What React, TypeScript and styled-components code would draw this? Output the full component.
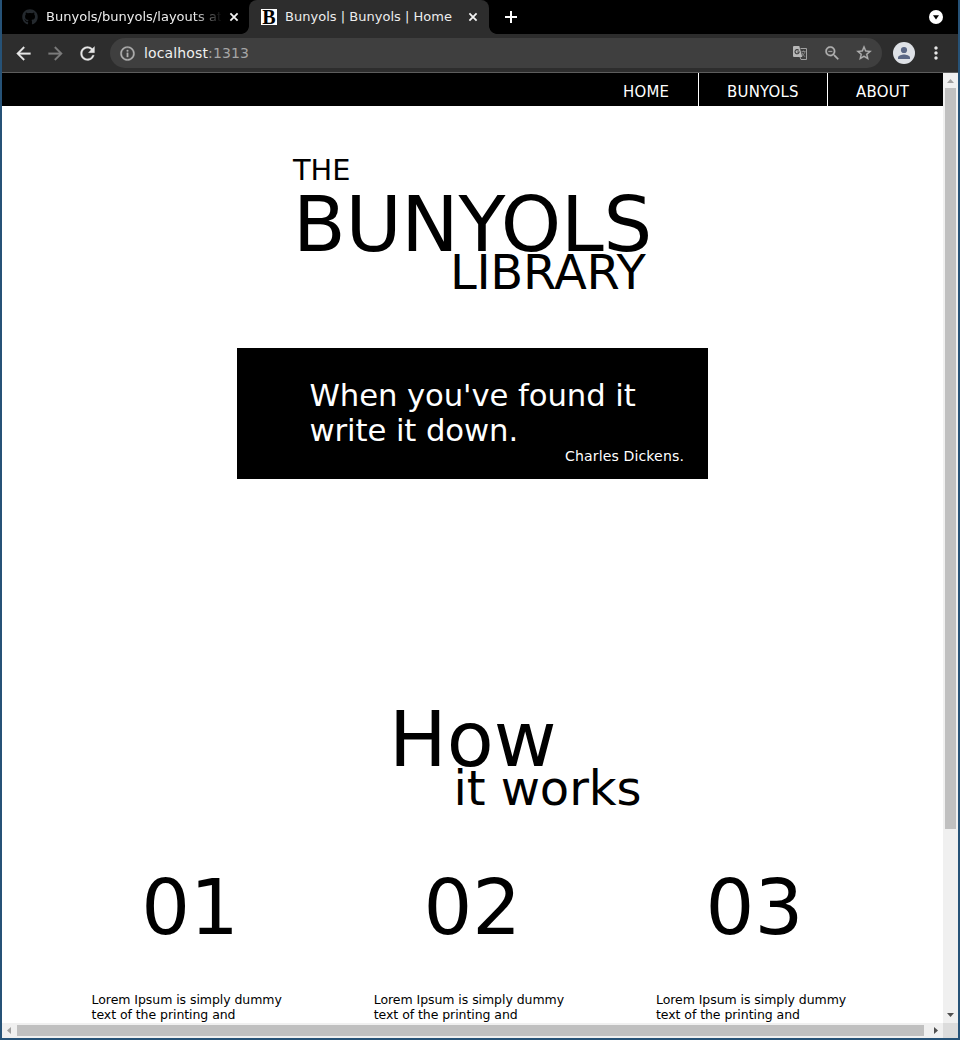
import React from "react";
import styled, { createGlobalStyle } from "styled-components";
import {
  MdArrowBack,
  MdArrowForward,
  MdRefresh,
  MdInfoOutline,
  MdZoomOut,
  MdStarBorder,
  MdMoreVert,
} from "react-icons/md";
import { FaGithub } from "react-icons/fa";

const GlobalStyle = createGlobalStyle`
  * { box-sizing: border-box; }
  body { margin: 0; font-family: "DejaVu Sans", sans-serif; overflow: hidden; }
`;

const Window = styled.div`
  width: 960px;
  height: 1040px;
  display: flex;
  flex-direction: column;
  background: #fff;
  border: 2px solid #265277;
  border-top: 0;
  overflow: hidden;
`;

const TabStrip = styled.div`
  height: 34px;
  flex: none;
  background: #000;
  display: flex;
  align-items: center;
`;

const Tab = styled.div<{ $active?: boolean }>`
  position: relative;
  width: ${(p) => (p.$active ? 240 : 247)}px;
  height: 34px;
  padding-left: ${(p) => (p.$active ? 12 : 20)}px;
  display: flex;
  align-items: center;
  color: #ececec;
  background: ${(p) => (p.$active ? "#2d2d2d" : "transparent")};
  border-radius: 8px 8px 0 0;
`;

const Flare = styled.span<{ $side: "left" | "right" }>`
  position: absolute;
  bottom: 0;
  ${(p) => p.$side}: -8px;
  width: 8px;
  height: 8px;
  background: radial-gradient(
    circle at ${(p) => (p.$side === "left" ? "0 0" : "100% 0")},
    #000 7.5px,
    #2d2d2d 8.2px
  );
`;

const TabTitle = styled.span<{ $fade?: boolean }>`
  width: 175px;
  margin-left: 8px;
  font-size: 13px;
  letter-spacing: 0.02px;
  line-height: 18px;
  white-space: nowrap;
  overflow: hidden;
  ${(p) =>
    p.$fade &&
    "mask-image: linear-gradient(to right, #000 148px, transparent 176px);"}
`;

const TabClose = styled.svg`
  width: 10px;
  height: 10px;
  margin-left: 8px;
  flex: none;
`;

const Favicon = styled.span`
  width: 16px;
  height: 16px;
  background: #fff;
  color: #000;
  font: bold 20px/16px "Liberation Serif", serif;
  display: flex;
  justify-content: center;
  flex: none;
`;

const GithubIcon = styled(FaGithub)`
  width: 16px;
  height: 16px;
  color: #24292e;
  flex: none;
`;

const NewTab = styled.svg`
  width: 14px;
  height: 14px;
  margin-left: 15px;
`;

const TabSearch = styled.svg`
  width: 14px;
  height: 14px;
  margin-left: auto;
  margin-right: 15px;
`;

const Toolbar = styled.div`
  height: 39px;
  flex: none;
  background: #2d2d2d;
  border-bottom: 1px solid #5c5c5c;
  display: flex;
  align-items: center;
  padding-left: 11.4px;
`;

const NavIcon = styled.span<{ $dim?: boolean }>`
  width: 32px;
  display: flex;
  font-size: 21px;
  color: ${(p) => (p.$dim ? "#7b7b7b" : "#e6e6e6")};
  path:last-child { stroke: currentColor; stroke-width: 0.3px; }
`;

const Omnibox = styled.div`
  width: 772px;
  height: 30px;
  margin-left: 0.6px;
  padding: 0 10px 0 9px;
  border-radius: 15px;
  background: #3f3f3f;
  color: #b0b0b0;
  display: flex;
  align-items: center;
  font-size: 17px;
  svg { flex: none; }
`;

const InfoIcon = styled(MdInfoOutline)`
  margin-left: 0.5px;
  path:last-child { stroke: currentColor; stroke-width: 0.5px; }
`;

const Url = styled.span`
  margin-left: 7.5px;
  margin-right: auto;
  font-size: 14px;
  letter-spacing: 0.14px;
  line-height: 20px;
  color: #a6a6a6;
  b { font-weight: normal; color: #f0f0f0; }
`;

const BoxIcon = styled.span`
  width: 32px;
  display: flex;
  justify-content: center;
  &:last-child { width: 16px; margin-left: 8px; }
`;

const ZoomIcon = styled(MdZoomOut)`
  width: 18.5px;
  height: 18.5px;
  path:last-child { stroke: currentColor; stroke-width: 0.3px; }
`;

const StarIcon = styled(MdStarBorder)`
  width: 18px;
  height: 18px;
  path:last-child { stroke: currentColor; stroke-width: 0.4px; }
`;

const TranslateSvg = styled.svg`
  width: 14px;
  height: 14px;
`;

const Avatar = styled.svg`
  width: 22px;
  height: 22px;
  margin-left: 11px;
`;

const MenuIcon = styled(MdMoreVert)`
  width: 20px;
  height: 20px;
  margin-left: 11.4px;
  color: #e6e6e6;
`;

const Viewport = styled.div`
  flex: 1;
  min-height: 0;
  display: grid;
  grid-template-columns: 941px 15px;
  grid-template-rows: 950px 15px;
`;

const Page = styled.main`
  overflow: hidden;
  background: #fff;
  color: #000;
`;

const SiteNav = styled.nav`
  height: 33px;
  padding-right: 5px;
  background: #000;
  display: flex;
  justify-content: flex-end;
`;

const NavLink = styled.a<{ $width: number }>`
  width: ${(p) => p.$width}px;
  padding: 10px 0 0 28px;
  font-family: "DejaVu Sans Condensed", "DejaVu Sans", sans-serif;
  font-stretch: semi-condensed;
  font-size: 16.6px;
  letter-spacing: 0.25px;
  line-height: 18px;
  color: #fff;
  & + & { border-left: 1px solid #fff; }
`;

const Hero = styled.header`
  width: 360px;
  margin: 47px 0 0 291px;
  display: flex;
  flex-direction: column;
`;

const Heading = styled.div<{
  $size: number;
  $line: number;
  $up?: number;
  $left?: number;
  $track?: number;
}>`
  font-size: ${(p) => p.$size}px;
  line-height: ${(p) => p.$line}px;
  margin-top: -${(p) => p.$up ?? 0}px;
  margin-left: ${(p) => p.$left ?? 0}px;
  letter-spacing: ${(p) => p.$track ?? 0}px;
  white-space: nowrap;
`;

const Quote = styled.blockquote`
  width: 471px;
  height: 131px;
  margin: 46px 0 0 235px;
  padding: 30px 24px 0 72.5px;
  background: #000;
  color: #fff;
`;

const QuoteText = styled.p`
  margin: 0;
  font-size: 30.72px;
  letter-spacing: -0.1px;
  line-height: 35px;
`;

const Author = styled.cite`
  display: block;
  font-style: normal;
  font-size: 14.08px;
  letter-spacing: 0.12px;
  line-height: 16px;
  text-align: right;
`;

const How = styled.section`
  margin: 223px 0 0 387px;
`;

const Steps = styled.section`
  margin: 45px 0 0 48px;
  display: grid;
  grid-template-columns: repeat(3, 282.2px);
`;

const Step = styled.article`
  padding-left: 41.6px;
`;

const StepNumber = styled.h2`
  margin: 0;
  width: 197px;
  font-size: 76.8px;
  line-height: 90px;
  font-weight: normal;
  text-align: center;
`;

const StepText = styled.p`
  margin: 39px 0 0;
  width: 200px;
  font-size: 12.5px;
  letter-spacing: -0.06px;
  line-height: 15px;
`;

const VBar = styled.div`
  background: #f0f0f0;
  display: flex;
  flex-direction: column;
  align-items: center;
`;

const HBar = styled.div`
  background: #f0f0f0;
  display: flex;
  align-items: center;
`;

const ArrowSvg = styled.svg`
  width: 15px;
  height: 15px;
  flex: none;
`;

const VThumb = styled.div`
  width: 11px;
  height: 741px;
  background: #c0c0c0;
  margin-bottom: auto;
`;

const HThumb = styled.div`
  width: 907px;
  height: 11px;
  background: #c0c0c0;
  margin-right: auto;
`;

const Corner = styled.div`
  background: #dcdcdc;
`;

const Arrow = ({ points, color }: { points: string; color: string }) => (
  <ArrowSvg viewBox="0 0 15 15">
    <polygon points={points} fill={color} />
  </ArrowSvg>
);

const Close = () => (
  <TabClose viewBox="0 0 10 10">
    <path d="M1.4 1.4l7.2 7.2M8.6 1.4l-7.2 7.2" stroke="#f4f4f4" strokeWidth="1.8" />
  </TabClose>
);

/* Filled page with a round mark in front of an outlined page */
const TranslateIcon = () => (
  <TranslateSvg viewBox="0 0 14 14" fill="none">
    <path d="M7.5 2.5h6v11H8l-1-2.5" stroke="#a2a2a2" />
    <path
      d="M8.5 5.5h4M10.5 4.5v1M12 5.7c-.4 1.6-1.500 3-3 4M9 6.500c.6 1.600 1.600 3 3 4.300"
      stroke="#929292"
      strokeWidth="0.8"
    />
    <path d="M1 0h5.3l3 11H1a1 1 0 0 1-1-1V1a1 1 0 0 1 1-1z" fill="#b8b8b8" />
    <path d="M5.7 4.300A2.100 2.100 0 1 0 6.200 6H4.200" stroke="#3f3f3f" strokeWidth="1.1" />
  </TranslateSvg>
);

export default function App() {
  return (
    <Window>
      <GlobalStyle />
      <TabStrip>
        <Tab>
          <GithubIcon />
          <TabTitle $fade>Bunyols/bunyols/layouts at</TabTitle>
          <Close />
        </Tab>
        <Tab $active>
          <Flare $side="left" />
          <Favicon>B</Favicon>
          <TabTitle>Bunyols | Bunyols | Home</TabTitle>
          <Close />
          <Flare $side="right" />
        </Tab>
        <NewTab viewBox="0 0 14 14">
          <path d="M7 1v12M1 7h12" stroke="#fff" strokeWidth="2" />
        </NewTab>
        <TabSearch viewBox="0 0 14 14">
          <circle cx="7" cy="7" r="7" fill="#fff" />
          <path d="M4 5.2h6L7 9.4z" fill="#000" />
        </TabSearch>
      </TabStrip>
      <Toolbar>
        <NavIcon><MdArrowBack /></NavIcon>
        <NavIcon $dim><MdArrowForward /></NavIcon>
        <NavIcon><MdRefresh /></NavIcon>
        <Omnibox>
          <InfoIcon />
          <Url><b>localhost</b>:1313</Url>
          <BoxIcon><TranslateIcon /></BoxIcon>
          <BoxIcon><ZoomIcon /></BoxIcon>
          <BoxIcon><StarIcon /></BoxIcon>
        </Omnibox>
        <Avatar viewBox="0 0 22 22">
          <circle cx="11" cy="11" r="11" fill="#dee1e6" />
          <circle cx="11" cy="8" r="3.1" fill="#5a6785" />
          <path d="M5 17v-1.6c0-2 4-3 6-3s6 1 6 3V17z" fill="#5a6785" />
        </Avatar>
        <MenuIcon />
      </Toolbar>
      <Viewport>
        <Page>
          <SiteNav>
            <NavLink $width={103}>HOME</NavLink>
            <NavLink $width={129}>BUNYOLS</NavLink>
            <NavLink $width={111}>ABOUT</NavLink>
          </SiteNav>
          <Hero>
            <Heading $size={28.8} $line={34}>THE</Heading>
            <Heading $size={76.8} $line={76} $track={-0.3}>BUNYOLS</Heading>
            <Heading $size={48} $line={60} $up={21} $left={157} $track={-0.3}>LIBRARY</Heading>
          </Hero>
          <Quote>
            <QuoteText>When you've found it<br />write it down.</QuoteText>
            <Author>Charles Dickens.</Author>
          </Quote>
          <How>
            <Heading $size={76.8} $line={76}>How</Heading>
            <Heading $size={48} $line={60} $up={20} $left={64.4} $track={-0.05}>it works</Heading>
          </How>
          <Steps>
            {["01", "02", "03"].map((n) => (
              <Step key={n}>
                <StepNumber>{n}</StepNumber>
                <StepText>Lorem Ipsum is simply dummy text of the printing and</StepText>
              </Step>
            ))}
          </Steps>
        </Page>
        <VBar>
          <Arrow points="4,10 11,10 7.5,6" color="#a0a0a0" />
          <VThumb />
          <Arrow points="4,5 11,5 7.5,9" color="#505050" />
        </VBar>
        <HBar>
          <Arrow points="9,4 9,11 5,7.5" color="#a0a0a0" />
          <HThumb />
          <Arrow points="6,4 6,11 10,7.5" color="#505050" />
        </HBar>
        <Corner />
      </Viewport>
    </Window>
  );
}
